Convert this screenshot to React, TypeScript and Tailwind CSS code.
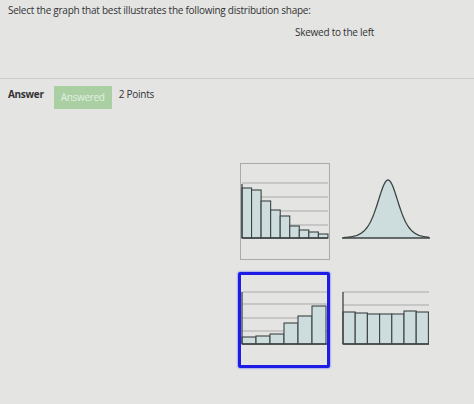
import React from 'react';

const FILL = '#cddcdc';
const INK = '#3d4343';
const GRID = '#a9a9a9';

type Bar = { x: number; w: number; top: number };

function bars(x0: number, w: number, tops: number[]): Bar[] {
  return tops.map((top, i) => ({ x: x0 + i * w, w, top }));
}

function Histogram({
  width, height, left, right, top, base, grid, data,
}: {
  width: number; height: number; left: number; right: number; top: number; base: number; grid: number[]; data: Bar[];
}) {
  return (
    <svg width={width} height={height} viewBox={`0 0 ${width} ${height}`} className="block">
      {grid.map((g) => (
        <line key={g} x1={left} x2={right} y1={g} y2={g} stroke={GRID} strokeWidth={1} />
      ))}
      {data.map((b, i) => (
        <rect key={i} x={b.x} y={b.top} width={b.w} height={base - b.top} fill={FILL} stroke={INK} strokeWidth={1.1} />
      ))}
      <line x1={left} x2={left} y1={top} y2={base} stroke={INK} strokeWidth={1.3} />
      <line x1={left} x2={right} y1={base} y2={base} stroke={INK} strokeWidth={1.3} />
    </svg>
  );
}

function Bell() {
  const base = 75;
  const pts: string[] = [];
  for (let x = 1; x <= 87; x += 1) {
    const s = 1 / Math.cosh((x - 46) / 14);
    pts.push(`${x},${(base - 58 * s * s).toFixed(2)}`);
  }
  const d = `M${pts.join(' L')}`;
  return (
    <svg width={88} height={97} viewBox="0 0 88 97" className="block">
      <path d={`${d} L87,${base} L1,${base} Z`} fill={FILL} />
      <path d={d} fill="none" stroke={INK} strokeWidth={1.3} />
      <line x1={0} x2={88} y1={base} y2={base} stroke={INK} strokeWidth={1.4} />
    </svg>
  );
}

export default function App() {
  return (
    <div className="w-[474px] h-[404px] overflow-hidden bg-[#e4e4e3] text-[#333333] font-['Open_Sans',sans-serif]">
      <p className="pl-2 pt-[2px] text-[10px] leading-[16px] tracking-[-0.25px]">
        Select the graph that best illustrates the following distribution shape:
      </p>
      <p className="pl-[295px] mt-[6px] text-[10px] leading-[16px] tracking-[-0.25px]">Skewed to the left</p>

      <div className="mt-[38px] border-t border-[#cbcbcb]" />

      <div className="flex items-center pl-2 mt-[3px] h-[24px]">
        <span className="font-bold text-[10px] tracking-[-0.3px]">Answer</span>
        <span className="ml-[10px] mt-[6px] w-[58px] h-[23px] flex items-center justify-center bg-[#a9cfa3] text-[#e4f0e1] text-[10px] tracking-[-0.3px]">
          Answered
        </span>
        <span className="ml-[7px] text-[10px] tracking-[-0.25px]">2 Points</span>
      </div>

      <div className="ml-[238px] mt-[57px] grid grid-cols-[92px_88px] gap-x-[12px] gap-y-[12px]">
        <div className="ml-[2px] w-[90px] h-[97px] border border-[#aaaaaa]">
          <Histogram
            width={88}
            height={95}
            left={1}
            right={87}
            top={20}
            base={74}
            grid={[19, 33, 47, 61]}
            data={bars(1, 9.55, [24, 26, 37, 46, 52, 62, 66, 68, 70])}
          />
        </div>
        <Bell />
        <div className="w-[92px] h-[96px] border-[3px] border-[#1c1ce6] rounded-[2px] shadow-[0_0_2px_#3a3aff]">
          <Histogram
            width={86}
            height={90}
            left={1}
            right={86}
            top={17}
            base={69}
            grid={[17, 29, 43, 56]}
            data={bars(1, 14, [62, 61, 59, 48, 41, 31])}
          />
        </div>
        <div>
          <Histogram
            width={88}
            height={96}
            left={1}
            right={87}
            top={20}
            base={72}
            grid={[20, 33]}
            data={bars(1, 12.2, [40, 41, 42, 42, 42, 39, 40])}
          />
        </div>
      </div>
    </div>
  );
}
